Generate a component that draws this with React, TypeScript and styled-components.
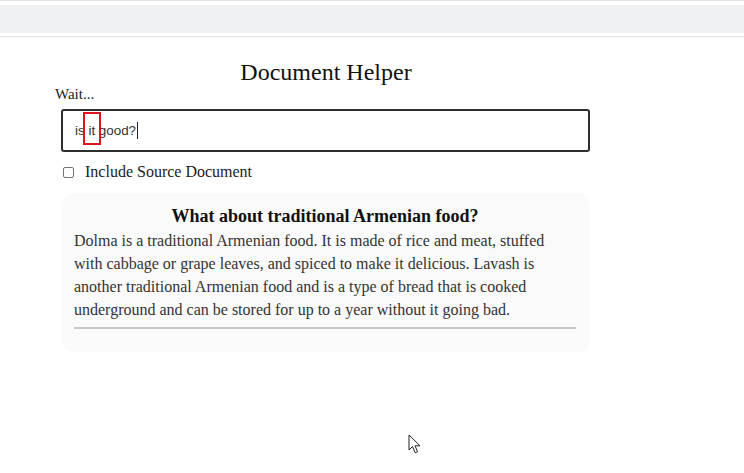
import React from "react";
import styled, { createGlobalStyle } from "styled-components";

const Global = createGlobalStyle`
  html, body { margin: 0; padding: 0; background: #ffffff; }
  body { font-family: "Liberation Serif", "Times New Roman", serif; color: #000; }
`;

const Page = styled.div`
  position: relative;
  width: 744px;
  height: 473px;
  overflow: hidden;
  background: #fff;
`;

const BrowserBar = styled.div`
  border-top: 1px solid #e3e4e6;
  border-bottom: 1px solid #dcdde0;
  padding: 4px 0 3px;
  background: #fff;
`;

const BarFill = styled.div`
  height: 28px;
  background: #f0f1f3;
`;

const Main = styled.main`
  width: 542px;
  margin: 0 0 0 55px;
  display: flex;
  flex-direction: column;
`;

const Title = styled.h1`
  margin: 21px 0 0;
  font-size: 24px;
  font-weight: normal;
  line-height: 28px;
  text-align: center;
  color: #111;
`;

const Status = styled.div`
  font-size: 15px;
  line-height: 17px;
  color: #222;
`;

const Field = styled.div`
  margin: 6px 0 0 6px;
  width: 529px;
  height: 43px;
  box-sizing: border-box;
  border: 2px solid #2e2e2e;
  border-radius: 3px;
  display: flex;
  align-items: center;
  padding-left: 12px;
  font-family: "Liberation Sans", Arial, sans-serif;
  font-size: 13.4px;
  color: #333;
`;

const Marked = styled.span`
  position: relative;
  &::after {
    content: "";
    position: absolute;
    left: -5px;
    top: -11px;
    width: 14px;
    height: 29px;
    border: 2px solid #e0141c;
  }
`;

const Caret = styled.span`
  display: inline-block;
  width: 1px;
  height: 17px;
  background: #222;
  margin-left: 1px;
`;

const CheckRow = styled.label`
  display: flex;
  align-items: center;
  margin: 11px 0 0 8px;
  font-size: 16px;
  color: #222;
`;

const Box = styled.span`
  width: 11px;
  height: 11px;
  box-sizing: border-box;
  border: 1px solid #767676;
  border-radius: 2px;
  margin-right: 11px;
  background: #fff;
`;

const Card = styled.section`
  margin: 12px 0 0 7px;
  width: 528px;
  box-sizing: border-box;
  padding: 12px 14px 23px 12px;
  background: #fafafa;
  border-radius: 12px;
`;

const Question = styled.h2`
  margin: 0;
  font-size: 18px;
  font-weight: bold;
  line-height: 22px;
  text-align: center;
  color: #111;
`;

const Answer = styled.p`
  margin: 2px 0 0;
  font-size: 16px;
  line-height: 23px;
  color: #333;
`;

const Line = styled.span`
  display: block;
  white-space: nowrap;
`;

const Rule = styled.hr`
  margin: 6px 0 0;
  border: none;
  height: 2px;
  background: #c8c8c8;
`;

const Pointer = styled.svg`
  position: absolute;
  left: 408px;
  top: 434px;
`;

export default function App() {
  const lines = [
    "Dolma is a traditional Armenian food. It is made of rice and meat, stuffed",
    "with cabbage or grape leaves, and spiced to make it delicious. Lavash is",
    "another traditional Armenian food and is a type of bread that is cooked",
    "underground and can be stored for up to a year without it going bad.",
  ];
  return (
    <Page>
      <Global />
      <BrowserBar>
        <BarFill />
      </BrowserBar>
      <Main>
        <Title>Document Helper</Title>
        <Status>Wait...</Status>
        <Field>
          <span>is&nbsp;</span>
          <Marked>it</Marked>
          <span>&nbsp;good?</span>
          <Caret />
        </Field>
        <CheckRow>
          <Box />
          Include Source Document
        </CheckRow>
        <Card>
          <Question>What about traditional Armenian food?</Question>
          <Answer>
            {lines.map((l) => (
              <Line key={l}>{l}</Line>
            ))}
          </Answer>
          <Rule />
        </Card>
      </Main>
      <Pointer width="14" height="21" viewBox="0 0 14 21">
        <path
          d="M1 1 L1 16 L4.5 12.5 L7.2 18.8 L9.6 17.8 L7 11.8 L12 11.8 Z"
          fill="#fff"
          stroke="#222"
          strokeWidth="1"
          strokeLinejoin="round"
        />
      </Pointer>
    </Page>
  );
}
